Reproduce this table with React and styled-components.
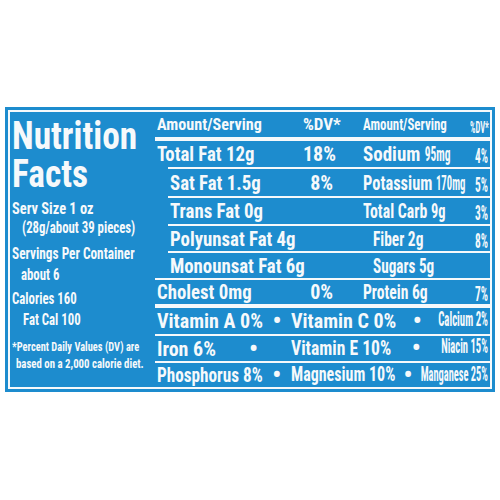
import React from "react";
import styled, { createGlobalStyle } from "styled-components";

const BLUE = "#1d8cce";
const INK = "#f6f9fb";
const FONT = `"Roboto Condensed", "Liberation Sans", Arial, sans-serif`;

const Global = createGlobalStyle`
  html, body { margin: 0; padding: 0; background: #fff; }
  body { font-family: ${FONT}; }
`;

const Page = styled.div`
  width: 500px;
  height: 500px;
  padding: 107px 5px 0;
  box-sizing: border-box;
`;

const Panel = styled.section`
  height: 285px;
  box-sizing: border-box;
  padding: 3px;
  background: ${BLUE};
  color: ${INK};
  font-family: ${FONT};
  font-weight: 700;
`;

const Frame = styled.div`
  height: 100%;
  box-sizing: border-box;
  border: 2px solid ${INK};
  display: flex;
`;

/* ---------- left column ---------- */
const Side = styled.div`
  width: 145px;
  flex: none;
  box-sizing: border-box;
  padding-left: 2px;
  display: flex;
  flex-direction: column;
`;

const Title = styled.h1`
  margin: 5px 0 0;
  font-size: 38px;
  line-height: 38px;
  font-weight: 700;
`;

const TitleLine = styled.span`
  display: block;
  white-space: nowrap;
  transform: scaleX(0.93);
  transform-origin: left center;
`;

const Group = styled.div`
  margin-top: ${(p) => p.$mt}px;
  font-size: ${(p) => p.$size || 16}px;
  line-height: ${(p) => p.$lh}px;
`;

const Line = styled.div`
  white-space: nowrap;
  margin-left: ${(p) => p.$indent || 0}px;
  transform: scaleX(${(p) => p.$sx || 0.8});
  transform-origin: left center;
`;

/* ---------- table ---------- */
const Table = styled.div`
  flex: 1;
  min-width: 0;
  display: flex;
  flex-direction: column;
`;

const Row = styled.div`
  height: ${(p) => p.$h}px;
  padding: ${(p) => p.$line || 0}px 2px 0;
  background: ${(p) =>
    p.$line
      ? `linear-gradient(${INK}, ${INK}) no-repeat ${p.$indent || 0}px 0 / calc(100% - ${p.$indent || 0}px) ${p.$line}px`
      : "none"};
  display: grid;
  grid-template-columns: 146px 30px 137px 1fr;
  align-items: center;
  font-size: ${(p) => p.$size || 20}px;
  line-height: 1.2;
`;

const MineralRow = styled(Row)`
  grid-template-columns: 134px 1fr auto;
`;

const Name = styled.div`
  margin-left: ${(p) => p.$indent || 0}px;
  white-space: nowrap;
  transform: scaleX(${(p) => p.$sx || 1});
  transform-origin: left center;
`;

const Pct = styled.div`
  text-align: right;
  white-space: nowrap;
`;

const Amount = styled.span`
  display: inline-block;
  transform: scaleX(${(p) => p.$sx});
  transform-origin: left center;
`;

/* condensed text whose box keeps its squeezed width */
const Squeeze = styled.span`
  display: inline-block;
  white-space: nowrap;
  font-size: ${(p) => (p.$base || 20) * (p.$k || 1)}px;
  line-height: 1.2;
  transform: scaleY(${(p) => 1 / (p.$k || 1)});
`;

const Cell = styled.div`
  display: flex;
  align-items: center;
  white-space: nowrap;
`;

const Dot = styled.span`
  flex: 1;
  text-align: center;
  font-size: 25px;
  line-height: 20px;
`;

const nutrients = [
  { line: 4, h: 26, name: "Total Fat 12g", pct: "18%", r: "Sodium", rsx: 0.95, ra: "95mg", rak: 0.6, rp: "4%" },
  { line: 2, h: 27, sub: true, name: "Sat Fat 1.5g", pct: "8%", r: "Potassium", rsx: 0.82, ra: "170mg", rak: 0.65, rp: "5%" },
  { line: 2, h: 26, sub: true, name: "Trans Fat 0g", pct: "", r: "Total Carb", rsx: 0.79, ra: "9g", rak: 0.91, rp: "3%" },
  { line: 2, h: 25, sub: true, name: "Polyunsat Fat 4g", pct: "", r: "Fiber 2g", rsx: 0.77, rsub: true, rp: "8%" },
  { line: 2, h: 25, sub: true, name: "Monounsat Fat 6g", pct: "", r: "Sugars 5g", rsx: 0.76, rsub: true, rp: "" },
  { line: 2, h: 24, name: "Cholest 0mg", pct: "0%", r: "Protein 6g", rsx: 0.78, rp: "7%" },
];

const minerals = [
  { line: 4, h: 26, a: ["Vitamin A 0%", 1], b: ["Vitamin C 0%", 1], c: ["Calcium 2%", 0.54] },
  { line: 2, h: 25, a: ["Iron 6%", 1], b: ["Vitamin E 10%", 0.88], c: ["Niacin 15%", 0.53] },
  { line: 2, h: 24, a: ["Phosphorus 8%", 0.86], b: ["Magnesium 10%", 0.8], c: ["Manganese 25%", 0.52] },
];

export default function App() {
  return (
    <Page>
      <Global />
      <Panel>
        <Frame>
          <Side>
            <Title>
              <TitleLine>Nutrition</TitleLine>
              <TitleLine>Facts</TitleLine>
            </Title>
            <Group $mt={6} $lh={19}>
              <Line $sx={0.9}>Serv Size 1 oz</Line>
              <Line $indent={10}>(28g/about 39 pieces)</Line>
            </Group>
            <Group $mt={6} $lh={21}>
              <Line $sx={0.83}>Servings Per Container</Line>
              <Line $indent={9}>about 6</Line>
            </Group>
            <Group $mt={3} $lh={21}>
              <Line>Calories 160</Line>
              <Line $indent={11}>Fat Cal 100</Line>
            </Group>
            <Group $mt={8} $lh={17} $size={13}>
              <Line>*Percent Daily Values (DV) are</Line>
              <Line $indent={4} $sx={0.83}>
                based on a 2,000 calorie diet.
              </Line>
            </Group>
          </Side>

          <Table>
            <Row $h={25} $size={17}>
              <Name $sx={0.95}>Amount/Serving</Name>
              <Pct>%DV*</Pct>
              <Name $indent={30} $sx={0.76}>
                Amount/Serving
              </Name>
              <Pct>
                <Squeeze $base={17} $k={0.5}>
                  %DV*
                </Squeeze>
              </Pct>
            </Row>
            {nutrients.map((n) => (
              <Row key={n.name} $line={n.line} $h={n.h} $indent={n.sub ? 13 : 0}>
                <Name $indent={n.sub ? 13 : 0} $sx={0.94}>
                  {n.name}
                </Name>
                <Pct>{n.pct}</Pct>
                <Name $indent={n.rsub ? 40 : 30} $sx={n.rsx}>
                  {n.r}
                  {n.ra ? " " : ""}
                  {n.ra && <Amount $sx={n.rak}>{n.ra}</Amount>}
                </Name>
                <Pct>{n.rp && <Squeeze $k={0.57}>{n.rp}</Squeeze>}</Pct>
              </Row>
            ))}
            {minerals.map((m) => (
              <MineralRow key={m.a[0]} $line={m.line} $h={m.h}>
                <Cell>
                  <Squeeze $k={m.a[1]}>{m.a[0]}</Squeeze>
                  <Dot>•</Dot>
                </Cell>
                <Cell>
                  <Squeeze $k={m.b[1]}>{m.b[0]}</Squeeze>
                  <Dot>•</Dot>
                </Cell>
                <Squeeze $k={m.c[1]}>{m.c[0]}</Squeeze>
              </MineralRow>
            ))}
          </Table>
        </Frame>
      </Panel>
    </Page>
  );
}
